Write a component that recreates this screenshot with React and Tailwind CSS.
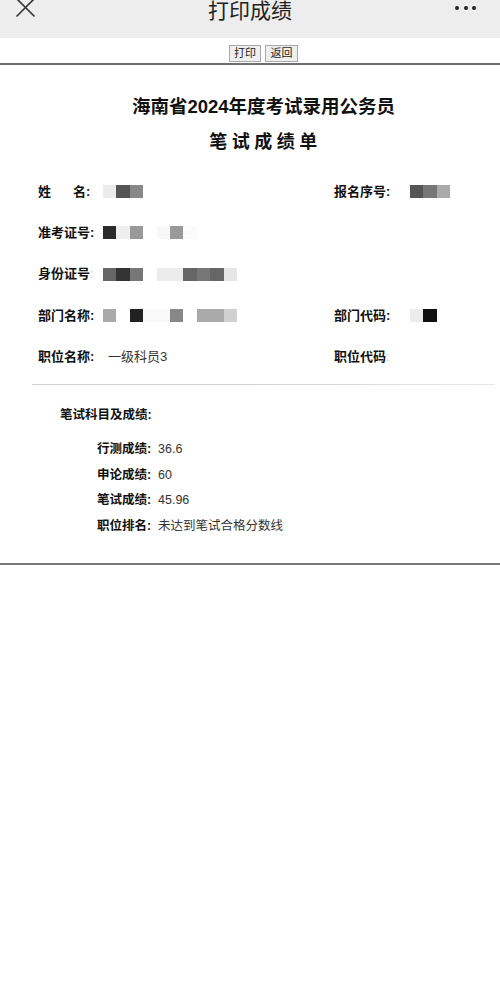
import React from "react";

const FONT = { fontFamily: '"Liberation Sans", "Noto Sans CJK SC", sans-serif' };

function Blocks({ colors }) {
  return (
    <div className="flex h-[13px]">
      {colors.map((c, i) => (
        <div key={i} className="h-[13px] w-[13.4px]" style={{ backgroundColor: c }} />
      ))}
    </div>
  );
}

function Label({ children, className = "w-[65px]" }) {
  return <div className={`shrink-0 text-[13px] font-bold text-[#111] ${className}`}>{children}</div>;
}

export default function App() {
  return (
    <div className="w-[500px] h-[987px] bg-white text-[#222]" style={FONT}>
      {/* top nav bar */}
      <div className="flex h-[38px] items-start bg-[#ededed]">
        <div className="flex w-[80px] pl-[14px] pt-0">
          <svg width="23" height="20" viewBox="0 0 23 20" className="-mt-[2px]">
            <path d="M2.5 0.5 L20.5 18.5 M20.5 0.5 L2.5 18.5" stroke="#333" strokeWidth="1.6" fill="none" />
          </svg>
        </div>
        <div className="flex-1 text-center text-[21px] leading-[21px] text-[#222]">打印成绩</div>
        <div className="flex w-[80px] justify-end gap-[4.5px] pr-[24px] pt-[6px]">
          <span className="block h-[4px] w-[4px] rounded-full bg-[#222]" />
          <span className="block h-[4px] w-[4px] rounded-full bg-[#222]" />
          <span className="block h-[4px] w-[4px] rounded-full bg-[#222]" />
        </div>
      </div>

      {/* buttons */}
      <div className="flex h-[25px] items-end justify-center gap-[4px] pb-[1px] pl-[27px]">
        <button className="h-[17px] w-[32px] border border-[#a9a9a9] bg-[#efefef] text-[11px] leading-[15px] text-[#222]">打印</button>
        <button className="h-[17px] w-[33px] border border-[#a9a9a9] bg-[#efefef] text-[11px] leading-[15px] text-[#222]">返回</button>
      </div>
      <div className="h-[2px] bg-[#6e6e6e]" />

      {/* title */}
      <div className="pt-[30px] pl-[27px] text-center text-[18.5px] font-bold leading-[24px] text-[#111]">海南省2024年度考试录用公务员</div>
      <div className="mt-[11px] pl-[31px] text-center text-[18px] font-bold leading-[24px] tracking-[4.5px] text-[#111]">笔试成绩单</div>

      {/* info rows */}
      <div className="mt-[17px] px-[38px]">
        <div className="flex h-[41.3px] items-center">
          <div className="flex w-[296px] items-center">
            <Label>
              <span>姓</span>
              <span className="ml-[22px]">名:</span>
            </Label>
            <Blocks colors={["#ebebeb", "#555", "#888"]} />
          </div>
          <div className="flex items-center">
            <Label className="w-[76px]">报名序号:</Label>
            <Blocks colors={["#555", "#777", "#aaa"]} />
          </div>
        </div>
        <div className="flex h-[41.3px] items-center">
          <Label>准考证号:</Label>
          <Blocks colors={["#2b2b2b", "#efefef", "#999", "#fff", "#f8f8f8", "#999", "#fbfbfb"]} />
        </div>
        <div className="flex h-[41.3px] items-center">
          <Label>
            身份证号<span className="font-normal text-[#ccc]">:</span>
          </Label>
          <Blocks colors={["#666", "#333", "#777", "#fff", "#ececec", "#ececec", "#666", "#777", "#666", "#e6e6e6"]} />
        </div>
        <div className="flex h-[41.3px] items-center">
          <div className="flex w-[296px] items-center">
            <Label>部门名称:</Label>
            <Blocks colors={["#aaa", "#fff", "#222", "#f9f9f9", "#f9f9f9", "#888", "#fff", "#aaa", "#aaa", "#d0d0d0"]} />
          </div>
          <div className="flex items-center">
            <Label className="w-[76px]">部门代码:</Label>
            <Blocks colors={["#ececec", "#111"]} />
          </div>
        </div>
        <div className="flex h-[41.3px] items-center">
          <div className="flex w-[296px] items-center">
            <Label className="w-[70px]">职位名称:</Label>
            <span className="text-[13px] text-[#333]">一级科员3</span>
          </div>
          <div className="flex items-center">
            <Label className="w-[76px]">
              职位代码<span className="font-normal text-[#ccc]">:</span>
            </Label>
          </div>
        </div>
      </div>

      <div className="ml-[32px] mr-[5px] mt-[7px] h-[1px] bg-gradient-to-r from-[#cfcfcf] via-[#d2d2d2] to-[#e8e8e8]" />

      {/* scores */}
      <div className="mt-[17px] pl-[60px]">
        <div className="flex h-[26px] items-center text-[12.5px] font-bold text-[#111]">笔试科目及成绩:</div>
        <div className="mt-[8px] pl-[37px]">
          {[
            ["行测成绩:", "36.6"],
            ["申论成绩:", "60"],
            ["笔试成绩:", "45.96"],
            ["职位排名:", "未达到笔试合格分数线"],
          ].map(([k, v]) => (
            <div key={k} className="flex h-[25.6px] items-center">
              <div className="w-[61px] shrink-0 text-[12.5px] font-bold text-[#111]">{k}</div>
              <div className="text-[12.5px] text-[#333]">{v}</div>
            </div>
          ))}
        </div>
      </div>

      <div className="mt-[24px] h-[2px] bg-[#777]" />
    </div>
  );
}
